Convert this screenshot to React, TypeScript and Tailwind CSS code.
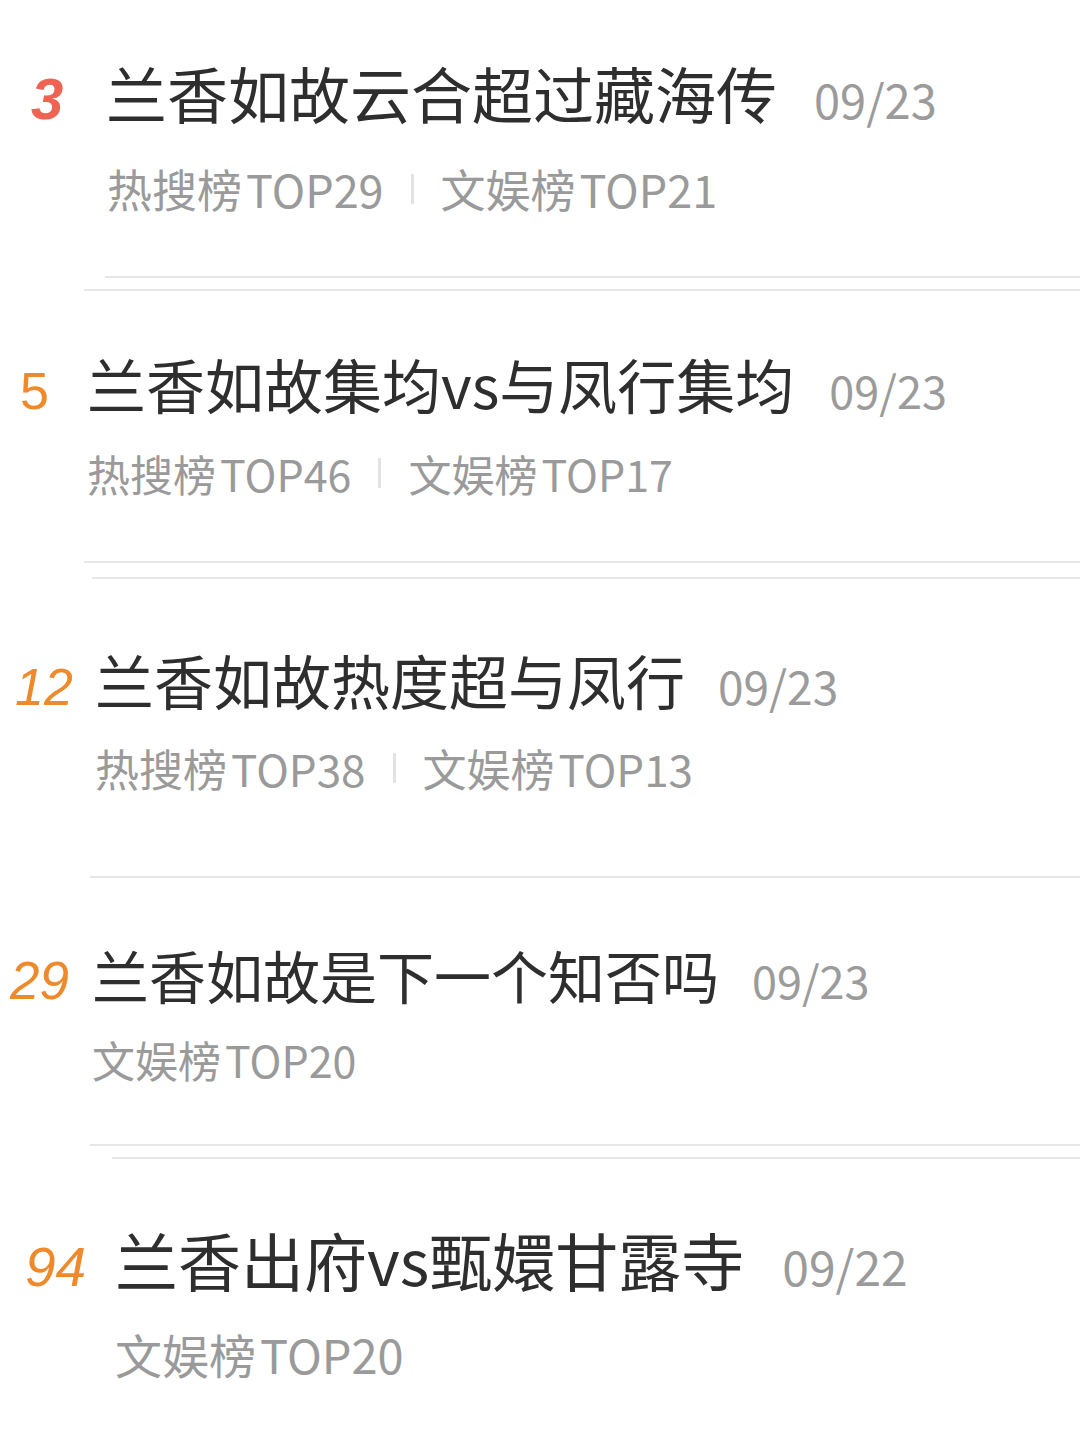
const cjk = { fontFamily: '"Noto Sans CJK SC", "Noto Sans", sans-serif' }
const num = { fontFamily: '"Liberation Sans", Arial, sans-serif' }

type Item = {
  rank: string
  rankCls: string
  box: string
  title: string
  titleCls: string
  date: string
  dateCls: string
  subRow: string
  subCls: string
  tags: [string, string][]
}

const items: Item[] = [
  {
    rank: '3',
    rankCls: 'w-[75px] text-[58px] font-bold italic text-[#ee6352]',
    box: 'h-[276px] pl-[31px] pt-[53px]',
    title: '兰香如故云合超过藏海传',
    titleCls: 'text-[61px] leading-[80px]',
    date: '09/23',
    dateCls: 'ml-[37px] text-[47px]',
    subRow: 'mt-[19px] pl-[76px]',
    subCls: 'text-[45px] leading-[56px]',
    tags: [['热搜榜', 'TOP29'], ['文娱榜', 'TOP21']],
  },
  {
    rank: '5',
    rankCls: 'w-[67px] text-[52px] text-[#ee8a2b]',
    box: 'h-[270px] pl-[20px] pt-[53px]',
    title: '兰香如故集均vs与凤行集均',
    titleCls: 'text-[59px] leading-[80px]',
    date: '09/23',
    dateCls: 'ml-[35px] text-[45px]',
    subRow: 'mt-[15px] pl-[67px]',
    subCls: 'text-[43px] leading-[56px]',
    tags: [['热搜榜', 'TOP46'], ['文娱榜', 'TOP17']],
  },
  {
    rank: '12',
    rankCls: 'w-[80px] text-[52px] italic text-[#ee8a2b]',
    box: 'h-[297px] pl-[15px] pt-[61px]',
    title: '兰香如故热度超与凤行',
    titleCls: 'text-[59px] leading-[80px]',
    date: '09/23',
    dateCls: 'ml-[33px] text-[46px]',
    subRow: 'mt-[14px] pl-[80px]',
    subCls: 'text-[44px] leading-[56px]',
    tags: [['热搜榜', 'TOP38'], ['文娱榜', 'TOP13']],
  },
  {
    rank: '29',
    rankCls: 'w-[82px] text-[53px] italic text-[#ee8a2b]',
    box: 'h-[266px] pl-[10px] pt-[56px]',
    title: '兰香如故是下一个知否吗',
    titleCls: 'text-[57px] leading-[80px]',
    date: '09/23',
    dateCls: 'ml-[33px] text-[45px]',
    subRow: 'mt-[10px] pl-[82px]',
    subCls: 'text-[43px] leading-[56px]',
    tags: [['文娱榜', 'TOP20']],
  },
  {
    rank: '94',
    rankCls: 'w-[90px] text-[55px] italic text-[#ee8a2b]',
    box: 'h-[281px] pl-[25px] pt-[60px]',
    title: '兰香出府vs甄嬛甘露寺',
    titleCls: 'text-[63px] leading-[80px]',
    date: '09/22',
    dateCls: 'ml-[38px] text-[48px]',
    subRow: 'mt-[17px] pl-[90px]',
    subCls: 'text-[47px] leading-[56px]',
    tags: [['文娱榜', 'TOP20']],
  },
]

function Line({ cls }: { cls: string }) {
  return <div className={`h-[2px] bg-[#e6e6e6] ${cls}`} />
}

function Row({ it }: { it: Item }) {
  return (
    <div className={`flex flex-col overflow-hidden ${it.box}`}>
      <div className="flex items-baseline whitespace-nowrap">
        <span style={num} className={`shrink-0 ${it.rankCls}`}>
          {it.rank}
        </span>
        <span style={cjk} className={`text-[#2e2e2e] ${it.titleCls}`}>
          {it.title}
        </span>
        <span style={cjk} className={`text-[#9b9b9b] ${it.dateCls}`}>
          {it.date}
        </span>
      </div>
      <div className={`flex items-center whitespace-nowrap ${it.subRow}`}>
        {it.tags.map(([a, b], i) => (
          <div key={a + b} className="flex items-center">
            {i > 0 && <span className="mx-[27px] h-[30px] w-[3px] bg-[#e3e3e3]" />}
            <span style={cjk} className={`text-[#9a9a9a] ${it.subCls}`}>
              {a}
              <span className="ml-[4px]">{b}</span>
            </span>
          </div>
        ))}
      </div>
    </div>
  )
}

export default function App() {
  return (
    <div className="w-[1080px] h-[1440px] overflow-hidden bg-white">
      <Row it={items[0]} />
      <Line cls="ml-[105px]" />
      <div className="h-[11px]" />
      <Line cls="ml-[84px]" />
      <Row it={items[1]} />
      <Line cls="ml-[84px]" />
      <div className="h-[14px]" />
      <Line cls="ml-[92px]" />
      <Row it={items[2]} />
      <Line cls="ml-[90px]" />
      <Row it={items[3]} />
      <Line cls="ml-[90px]" />
      <div className="h-[11px]" />
      <Line cls="ml-[112px]" />
      <Row it={items[4]} />
    </div>
  )
}
